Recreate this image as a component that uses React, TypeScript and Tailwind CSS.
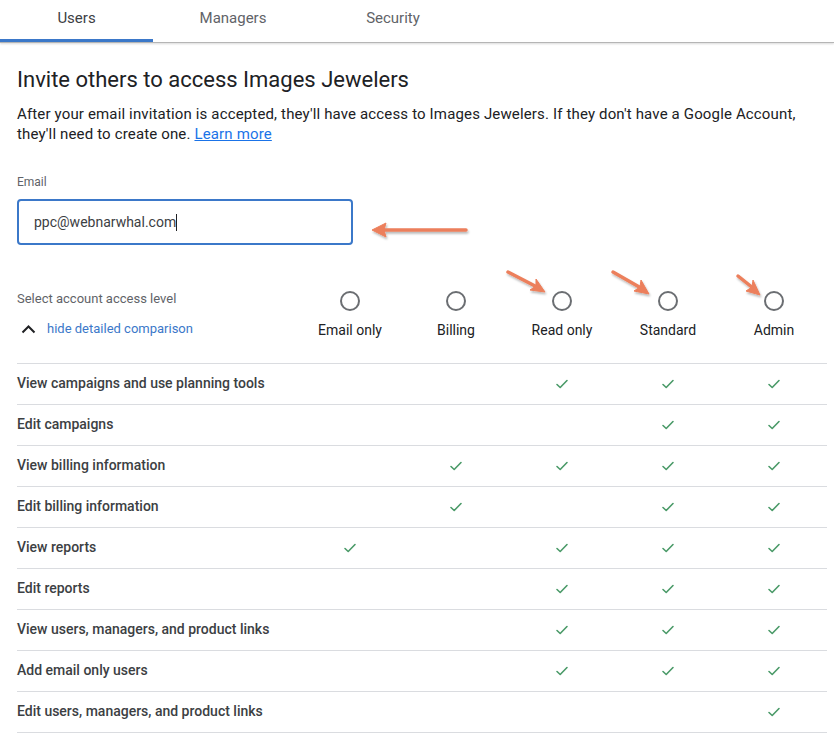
import React from "react";

const levels = ["Email only", "Billing", "Read only", "Standard", "Admin"];

// which access levels include each permission, in the order of `levels`
const permissions: { label: string; grants: boolean[] }[] = [
  { label: "View campaigns and use planning tools", grants: [false, false, true, true, true] },
  { label: "Edit campaigns", grants: [false, false, false, true, true] },
  { label: "View billing information", grants: [false, true, true, true, true] },
  { label: "Edit billing information", grants: [false, true, false, true, true] },
  { label: "View reports", grants: [true, false, true, true, true] },
  { label: "Edit reports", grants: [false, false, true, true, true] },
  { label: "View users, managers, and product links", grants: [false, false, true, true, true] },
  { label: "Add email only users", grants: [false, false, true, true, true] },
  { label: "Edit users, managers, and product links", grants: [false, false, false, false, true] },
];

function Check() {
  return (
    <svg width="14" height="12" viewBox="0 0 14 12" fill="none">
      <path d="M2 6.5 L5.2 9.5 L12 2.5" stroke="#4a9a68" strokeWidth="1.6" strokeLinecap="round" strokeLinejoin="round" />
    </svg>
  );
}

function Radio() {
  return <div className="w-[20px] h-[20px] rounded-full border-2 border-[#6b6e72]" />;
}

function Arrows() {
  // orange callout arrows drawn over the form
  return (
    <svg className="absolute inset-0 pointer-events-none" width="834" height="740" viewBox="0 0 834 740">
      <defs>
        <filter id="arrowShadow" x="-20%" y="-50%" width="140%" height="200%">
          <feDropShadow dx="1" dy="2" stdDeviation="1.2" floodColor="#000" floodOpacity="0.28" />
        </filter>
      </defs>
      <g fill="#ec7f5b" stroke="#ec7f5b" filter="url(#arrowShadow)">
        <line x1="466" y1="230" x2="382" y2="230" strokeWidth="3.5" strokeLinecap="round" />
        <path d="M372 230 L386 223 L384 230 L386 237 Z" strokeWidth="1" />

        <line x1="508" y1="272" x2="537" y2="287" strokeWidth="3.5" strokeLinecap="round" />
        <path d="M545 292 L530 290 L536 286 L536 279 Z" strokeWidth="1" />

        <line x1="613" y1="272" x2="641" y2="288" strokeWidth="3.5" strokeLinecap="round" />
        <path d="M649 294 L634 291 L640 287 L641 280 Z" strokeWidth="1" />

        <line x1="738" y1="276" x2="753" y2="288" strokeWidth="3.5" strokeLinecap="round" />
        <path d="M760 295 L746 291 L752 287 L753 280 Z" strokeWidth="1" />
      </g>
    </svg>
  );
}

export default function App() {
  return (
    <div className="relative w-[834px] h-[740px] overflow-hidden bg-white font-['Roboto',sans-serif] text-[#202124]">
      {/* Tabs */}
      <div className="flex h-[43px] border-b border-[#b5b5b5] shadow-[0_1px_2px_rgba(0,0,0,0.15)]">
        <div className="w-[153px] pt-[8px] text-center text-[15px] leading-[20px] text-[#3c4043] border-b-[3px] border-[#3b78c9]">
          Users
        </div>
        <div className="w-[160px] pt-[8px] text-center text-[15px] leading-[20px] text-[#5f6368]">
          Managers
        </div>
        <div className="w-[160px] pt-[8px] text-center text-[15px] leading-[20px] text-[#5f6368]">
          Security
        </div>
      </div>

      <div className="px-[17px]">
        <h1 className="mt-[23px] text-[22px] leading-[28px] font-normal text-[#202124]">
          Invite others to access Images Jewelers
        </h1>
        <p className="mt-[10px] w-[790px] text-[15px] leading-[20px] tracking-[0.15px] text-[#202124]">
          After your email invitation is accepted, they'll have access to Images Jewelers. If they don't have a Google Account,
          they'll need to create one.{" "}
          <a className="text-[#1a73e8] underline">Learn more</a>
        </p>

        <div className="mt-[30px] text-[12px] leading-[16px] text-[#5f6368]">Email</div>
        <div className="mt-[9px] w-[336px] h-[46px] rounded-[4px] border-2 border-[#3b78c9] flex items-center pl-[15px] text-[14px] text-[#3c4043]">
          ppc@webnarwhal.com
          <span className="inline-block w-px h-[17px] bg-[#202124]" />
        </div>

        {/* Access level comparison */}
        <div className="mt-[46px] w-[810px]">
          <div className="grid grid-cols-[280px_repeat(5,106px)] pb-[23px] border-b border-[#dadce0]">
            <div className="flex flex-col">
              <div className="text-[13px] leading-[16px] text-[#5f6368]">Select account access level</div>
              <div className="mt-[14px] flex items-center gap-[11px] pl-[4px] text-[13px] leading-[16px] text-[#3b78c9]">
                <svg width="15" height="10" viewBox="0 0 15 10" fill="none">
                  <path d="M1.5 8.5 L7.5 2.5 L13.5 8.5" stroke="#202124" strokeWidth="2" />
                </svg>
                hide detailed comparison
              </div>
            </div>
            {levels.map((level) => (
              <div key={level} className="flex flex-col items-center">
                <Radio />
                <div className="mt-[9px] text-[14px] leading-[20px] text-[#202124]">{level}</div>
              </div>
            ))}
          </div>

          {permissions.map((row) => (
            <div key={row.label} className="grid grid-cols-[280px_repeat(5,106px)] h-[41px] items-center border-b border-[#dadce0]">
              <div className="text-[14px] font-medium text-[#3c4043] pb-[1px]">{row.label}</div>
              {row.grants.map((granted, i) => (
                <div key={i} className="flex justify-center">
                  {granted && <Check />}
                </div>
              ))}
            </div>
          ))}
        </div>
      </div>

      <Arrows />
    </div>
  );
}
